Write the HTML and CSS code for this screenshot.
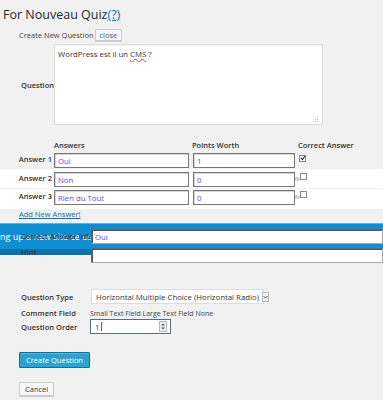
FILE: index.html
```html
<!DOCTYPE html>
<html lang="fr">
<head>
  <meta charset="UTF-8">
  <title>For Nouveau Quiz</title>
  <link rel="stylesheet" href="styles.css">
</head>
<body>
  <div class="wrap">
    <h2 class="page-title">For Nouveau Quiz<a class="help" href="#">(?)</a></h2>

    <div class="create-bar">
      <span>Create New Question</span>
      <button class="btn">close</button>
    </div>

    <!-- Question -->
    <div class="question-row">
      <label class="lbl">Question</label>
      <div class="q-text">
        <span>WordPress est il un <span class="misspelt">CMS</span> ?</span>
        <svg class="grip" width="6" height="6" viewBox="0 0 6 6">
          <rect x="4" y="0" width="1" height="1" fill="#bbb"/>
          <rect x="2" y="2" width="1" height="1" fill="#bbb"/>
          <rect x="4" y="2" width="1" height="1" fill="#bbb"/>
          <rect x="0" y="4" width="1" height="1" fill="#bbb"/>
          <rect x="2" y="4" width="1" height="1" fill="#bbb"/>
          <rect x="4" y="4" width="1" height="1" fill="#bbb"/>
        </svg>
      </div>
    </div>

    <!-- Réponses -->
    <div class="answers">
      <div class="answer-head">
        <span></span><span>Answers</span><span>Points Worth</span><span>Correct Answer</span>
      </div>
      <div class="answer-row first">
        <label class="lbl num">Answer 1</label>
        <input class="fld ans" value="Oui">
        <input class="fld pts" value="1">
        <span class="cb checked">
          <svg width="6" height="6" viewBox="0 0 6 6"><path d="M1 3 L2.5 4.5 L5 1" stroke="#333" stroke-width="1.2" fill="none"/></svg>
        </span>
      </div>
      <div class="answer-row alt">
        <label class="lbl num">Answer 2</label>
        <input class="fld ans" value="Non">
        <input class="fld pts" value="0">
        <span class="cb-wrap"><span class="frag">fic</span><span class="cb"></span></span>
      </div>
      <div class="answer-row alt last">
        <label class="lbl num">Answer 3</label>
        <input class="fld ans" value="Rien du Tout">
        <input class="fld pts" value="0">
        <span class="cb-wrap"><span class="frag">fic</span><span class="cb"></span></span>
      </div>
      <a class="add-link" href="#">Add New Answer!</a>
    </div>

    <!-- Bandeau + info -->
    <div class="info-block">
      <div class="info-row">
        <div class="stack">
          <span class="notice-text">ng up a new site ce us</span>
          <label class="lbl info-lbl">Correct Answer Info</label>
        </div>
        <input class="fld wide" value="Oui">
      </div>
      <div class="info-row">
        <label class="lbl info-lbl hint">Hint</label>
        <input class="fld wide" value="">
      </div>
    </div>

    <!-- Options -->
    <div class="options">
      <div class="opt-row type-row">
        <label class="lbl">Question Type</label>
        <div class="select">
          <span>Horizontal Multiple Choice (Horizontal Radio)</span>
          <span class="arrow">
            <svg width="5" height="4" viewBox="0 0 5 4"><path d="M0.5 1 L2.5 3 L4.5 1" stroke="#555" stroke-width="1" fill="none"/></svg>
          </span>
        </div>
      </div>
      <div class="opt-row comment-row">
        <label class="lbl">Comment Field</label>
        <span class="plain">Small Text Field Large Text Field None</span>
      </div>
      <div class="opt-row order-row">
        <label class="lbl">Question Order</label>
        <div class="number">
          <span class="val">1<span class="caret"></span></span>
          <span class="spin">
            <svg width="6" height="9" viewBox="0 0 6 9">
              <path d="M1 3.5 L3 1.5 L5 3.5Z" fill="#555"/>
              <path d="M1 5.5 L3 7.5 L5 5.5Z" fill="#555"/>
            </svg>
          </span>
        </div>
      </div>
    </div>

    <button class="btn primary">Create Question</button>
    <button class="btn cancel">Cancel</button>
  </div>
</body>
</html>
```

FILE: styles.css
```css
/* Base */
* { margin:0; padding:0; box-sizing:border-box; }
body {
  background:#f1f1f1; color:#32373c;
  font-family:"Open Sans","Liberation Sans",sans-serif; font-size:7.5px;
}
.wrap { padding:0 0 4px; }

/* Titre */
.page-title {
  font-size:12.5px; font-weight:400; color:#23282d;
  line-height:16px; padding:7px 0 0 3px;
}
.help { color:#0073aa; }

.create-bar {
  display:flex; align-items:center; gap:1px;
  margin-top:6px; padding-left:19px; color:#444;
}
.btn {
  font-family:inherit; font-size:7.5px; color:#555;
  background:#f7f7f7; border:1px solid #ccc; border-radius:1px;
  box-shadow:0 1px 0 #ccc; cursor:pointer;
}
.create-bar .btn { height:12px; padding:0 4px; line-height:10px; }

.lbl { font-weight:600; color:#333; white-space:nowrap; }

/* Question */
.question-row {
  display:grid; grid-template-columns:54px 269px;
  align-items:center; margin-top:3px;
}
.question-row .lbl { padding-left:21px; }
.q-text {
  height:81px; background:#fff; border:1px solid #ddd;
  box-shadow:inset 0 1px 2px rgba(0,0,0,.07);
  padding:4px 3px 1px; color:#333; font-size:7.8px; line-height:10px;
  display:flex; flex-direction:column; justify-content:space-between;
}
.misspelt { text-decoration:underline wavy #e04040; text-decoration-thickness:1px; }
.grip { align-self:flex-end; }

/* Réponses */
.answers { margin-top:15px; }
.answer-head {
  display:grid; grid-template-columns:54px 138px 106px 1fr;
  font-weight:600; color:#333; line-height:11px; height:11px;
}
.answer-row {
  display:grid; grid-template-columns:54px 139px 106px 1fr;
  align-items:start; padding:2px 0 1px;
}
.answer-row.alt { background:#fff; padding:3px 0 1px; }
.answer-row.last { margin-top:1px; padding:1px 0 4px; }
.num { text-align:right; padding:1px 2px 0 0; }

.fld {
  height:15px; font-family:inherit; font-size:7.8px; color:#6f45e0;
  background:#fff; border:1px solid #777;
  box-shadow:inset 1px 1px 0 #d5d5d5; padding:0 3px; outline:none;
}
.fld.ans { width:135px; }
.fld.pts { width:102px; }

.cb {
  display:block; width:7px; height:7px; margin-top:2px;
  background:#fff; border:1px solid #888;
}
.cb svg { display:block; margin:-1px 0 0 0; }
.cb-wrap { display:flex; align-items:flex-start; margin-left:-4px; }
.frag { font-size:4.5px; color:#666; line-height:5px; margin-top:5px; }
.cb-wrap .cb { margin-top:1px; }

.add-link {
  display:block; color:#0073aa; padding-left:19px;
  line-height:10px; margin-top:0;
}

/* Bandeau bleu */
.info-block {
  margin-top:4px; padding-top:6px;
  background:linear-gradient(to bottom,
    #5ab6e6 0, #5ab6e6 1px,
    #0f8fd3 1px, #0f8fd3 26px,
    #0a72a9 26px, #0a72a9 32px,
    transparent 32px);
}
.info-row {
  display:grid; grid-template-columns:91px 1fr; align-items:center;
}
.info-row + .info-row { margin-top:4px; }
.stack { display:grid; overflow:hidden; }
.stack > * { grid-area:1/1; }
.notice-text {
  color:#fff; font-size:9px; white-space:nowrap; overflow:hidden;
  line-height:15px;
}
.info-lbl { color:#3a3a3a; padding-left:21px; line-height:15px; }
.info-lbl.hint { align-self:start; line-height:9px; }
.fld.wide { width:100%; box-shadow:inset 1px 1px 0 #555; border-color:#666 #aaa #aaa #666; }

/* Options */
.options { margin-top:26px; }
.opt-row {
  display:grid; grid-template-columns:70px auto; align-items:center;
  padding-left:20px;
}
.opt-row > * { justify-self:start; }
.opt-row .lbl { padding-left:1px; }
.select {
  display:flex; align-items:center; gap:3px;
  height:15px; width:173px; background:#fff; border:1px solid #ddd;
  padding:0 1px 0 4px; color:#333; font-size:7.8px; margin-left:1px;
}
.select span:first-child { flex:1; white-space:nowrap; }
.arrow {
  display:flex; align-items:center; justify-content:center;
  width:8px; height:10px; border:1px solid #bbb; background:#f3f3f3;
}
.comment-row { margin-top:4px; }
.plain { color:#444; font-size:7px; }
.order-row { margin-top:1px; }
.number {
  display:flex; align-items:center; justify-content:space-between;
  width:81px; height:15px; background:#fff;
  border:1px solid #5b6b80; padding:0 3px 0 4px;
  color:#333; font-size:8px;
}
.val { display:flex; align-items:center; }
.caret { display:inline-block; width:1px; height:9px; background:#6f45e0; margin-left:1px; }
.spin {
  display:flex; align-items:center; justify-content:center;
  width:8px; height:11px; border:1px solid #bbb; background:#f0f0f0;
}

/* Boutons */
.btn.primary {
  display:block; margin:18px 0 0 19px; height:16px; padding:0 6px;
  background:#2ea2cc; border-color:#0074a2; color:#fff;
  box-shadow:inset 0 1px 0 rgba(120,200,230,.5);
}
.btn.cancel {
  display:block; margin:14px 0 0 19px; height:14px; padding:0 5px;
  color:#333;
}
```
